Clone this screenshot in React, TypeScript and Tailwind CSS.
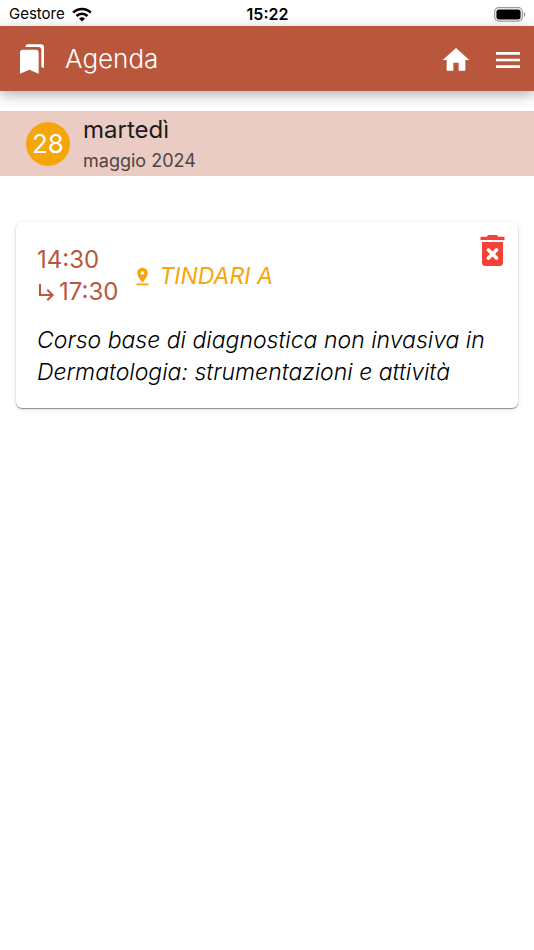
import { MdBookmarks, MdHome, MdMenu, MdPinDrop, MdSubdirectoryArrowRight } from "react-icons/md";

type Appointment = {
  start: string;
  end: string;
  room: string;
  title: string;
};

// Appointments of the selected day
const appointments: Appointment[] = [
  {
    start: "14:30",
    end: "17:30",
    room: "TINDARI A",
    title: "Corso base di diagnostica non invasiva in Dermatologia: strumentazioni e attività",
  },
];

function WifiIcon() {
  return (
    <svg viewBox="0 0 20 15" className="w-5" aria-hidden="true">
      <g fill="none" stroke="currentColor" strokeWidth="2.7">
        <path d="M1.2 5.6a12.6 12.6 0 0 1 17.6 0" />
        <path d="M4.5 9a7.9 7.9 0 0 1 11 0" />
      </g>
      <path d="M10 14.6 7 11.6a4.3 4.3 0 0 1 6 0z" fill="currentColor" />
    </svg>
  );
}

function BatteryIcon() {
  return (
    <svg viewBox="0 0 32 15" className="w-8" aria-hidden="true">
      <rect x="0.7" y="0.7" width="27.6" height="13.4" rx="4" fill="none" stroke="#999" strokeWidth="1.2" />
      <rect x="2.4" y="2.4" width="24.2" height="10" rx="2.6" fill="#000" />
      <path d="M29.8 5v4.8c1-.4 1.6-1.3 1.6-2.4s-.6-2-1.6-2.4z" fill="#999" />
    </svg>
  );
}

function TrashIcon() {
  return (
    <svg viewBox="0 0 25 31" className="w-[25px]" aria-hidden="true">
      <path d="M0.5 1.7h6.2L8.2 0h8.6l1.5 1.7h6.2v3.3H0.5z" fill="currentColor" />
      <path d="M2 7h21v20.5a3.5 3.5 0 0 1-3.5 3.5h-14A3.5 3.5 0 0 1 2 27.5z" fill="currentColor" />
      <path d="M8.5 15l8 8M16.5 15l-8 8" stroke="#fff" strokeWidth="3.6" strokeLinecap="round" />
    </svg>
  );
}

function StatusBar() {
  return (
    <div className="grid h-[26px] grid-cols-3 items-center pt-0.5 pr-2 pl-[9px] text-[15px] text-black">
      <div className="flex items-center gap-[7px]">
        <span>Gestore</span>
        <WifiIcon />
      </div>
      <span className="text-center text-base font-semibold">15:22</span>
      <div className="flex justify-end">
        <BatteryIcon />
      </div>
    </div>
  );
}

function Header() {
  return (
    <header className="flex h-[65px] items-center bg-[#b9573c] pr-2.5 pl-4 text-white shadow-[0_4px_12px_rgba(0,0,0,0.3)]">
      <MdBookmarks className="size-8" />
      <h1 className="ml-[17px] flex-1 text-[26px] font-light">Agenda</h1>
      <div className="flex gap-5 pt-0.5">
        <button type="button" aria-label="Home" className="cursor-pointer">
          <MdHome className="size-8" />
        </button>
        <button type="button" aria-label="Menu" className="cursor-pointer">
          <MdMenu className="size-8" />
        </button>
      </div>
    </header>
  );
}

function DayBanner() {
  return (
    <section className="mt-5 flex h-[65px] items-center gap-[13px] bg-[#eaccc5] pl-[26px]">
      <div className="flex size-11 items-center justify-center rounded-full bg-[#f5a60a] text-[26px] text-white">
        28
      </div>
      <div className="pt-0.5">
        <h2 className="text-2xl leading-8 text-[#1c1c1c]">martedì</h2>
        <p className="text-lg leading-[30px] text-[#4d4644]">maggio 2024</p>
      </div>
    </section>
  );
}

function AppointmentCard({ item }: { item: Appointment }) {
  return (
    <article className="relative rounded-md bg-white px-[21px] pt-[22px] pb-5 shadow-[0_1px_1px_rgba(0,0,0,0.4),0_1px_5px_rgba(0,0,0,0.12)]">
      <div className="flex items-center gap-3.5">
        <div className="text-2xl leading-8 text-[#b9573c]">
          <div>{item.start}</div>
          <div className="-ml-0.5 flex items-center">
            <MdSubdirectoryArrowRight className="size-6" />
            {item.end}
          </div>
        </div>
        <div className="flex items-center gap-1.5 text-[23px] leading-8 text-[#f5a60a] italic">
          <MdPinDrop className="size-[21px]" />
          {item.room}
        </div>
      </div>
      <p className="mt-4 text-[23px] leading-8 font-light text-black italic">{item.title}</p>
      {/* Delete button in the corner of the card */}
      <button type="button" aria-label="Elimina" className="absolute top-[13px] right-[13px] cursor-pointer text-[#f44336]">
        <TrashIcon />
      </button>
    </article>
  );
}

export default function App() {
  return (
    <div className="min-h-screen bg-white font-['Inter',sans-serif]">
      <StatusBar />
      <Header />
      <main>
        <DayBanner />
        <div className="mt-[46px] flex flex-col gap-4 px-4">
          {appointments.map((item) => (
            <AppointmentCard key={item.start} item={item} />
          ))}
        </div>
      </main>
    </div>
  );
}
